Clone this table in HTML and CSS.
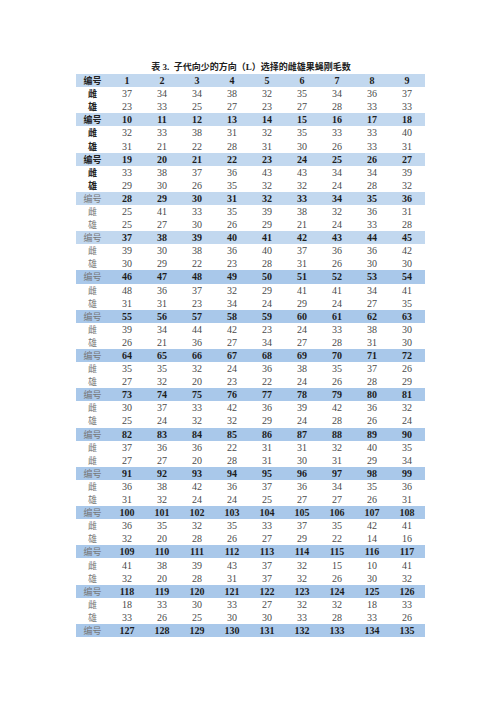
FILE: index.html
```html
<!DOCTYPE html>
<html lang="zh">
<head>
<meta charset="utf-8">
<link rel="stylesheet" href="styles.css">
</head>
<body>
<div class="page">
<div class="title">表 3.&nbsp; 子代向少的方向（L）选择的雌雄果蝇刚毛数</div>
<table class="data">
<tbody>
<tr class="hd light strong"><th>编号</th><td>1</td><td>2</td><td>3</td><td>4</td><td>5</td><td>6</td><td>7</td><td>8</td><td>9</td></tr>
<tr class="strong"><th>雌</th><td>37</td><td>34</td><td>34</td><td>38</td><td>32</td><td>35</td><td>34</td><td>36</td><td>37</td></tr>
<tr class="strong"><th>雄</th><td>23</td><td>33</td><td>25</td><td>27</td><td>23</td><td>27</td><td>28</td><td>33</td><td>33</td></tr>
<tr class="hd light strong"><th>编号</th><td>10</td><td>11</td><td>12</td><td>13</td><td>14</td><td>15</td><td>16</td><td>17</td><td>18</td></tr>
<tr class="strong"><th>雌</th><td>32</td><td>33</td><td>38</td><td>31</td><td>32</td><td>35</td><td>33</td><td>33</td><td>40</td></tr>
<tr class="strong"><th>雄</th><td>31</td><td>21</td><td>22</td><td>28</td><td>31</td><td>30</td><td>26</td><td>33</td><td>31</td></tr>
<tr class="hd light strong"><th>编号</th><td>19</td><td>20</td><td>21</td><td>22</td><td>23</td><td>24</td><td>25</td><td>26</td><td>27</td></tr>
<tr class="strong"><th>雌</th><td>33</td><td>38</td><td>37</td><td>36</td><td>43</td><td>43</td><td>34</td><td>34</td><td>39</td></tr>
<tr class="strong"><th>雄</th><td>29</td><td>30</td><td>26</td><td>35</td><td>32</td><td>32</td><td>24</td><td>28</td><td>32</td></tr>
<tr class="hd light"><th>编号</th><td>28</td><td>29</td><td>30</td><td>31</td><td>32</td><td>33</td><td>34</td><td>35</td><td>36</td></tr>
<tr><th>雌</th><td>25</td><td>41</td><td>33</td><td>35</td><td>39</td><td>38</td><td>32</td><td>36</td><td>31</td></tr>
<tr><th>雄</th><td>25</td><td>27</td><td>30</td><td>26</td><td>29</td><td>21</td><td>24</td><td>33</td><td>28</td></tr>
<tr class="hd light"><th>编号</th><td>37</td><td>38</td><td>39</td><td>40</td><td>41</td><td>42</td><td>43</td><td>44</td><td>45</td></tr>
<tr><th>雌</th><td>39</td><td>30</td><td>38</td><td>36</td><td>40</td><td>37</td><td>36</td><td>36</td><td>42</td></tr>
<tr><th>雄</th><td>30</td><td>29</td><td>22</td><td>23</td><td>28</td><td>31</td><td>26</td><td>30</td><td>30</td></tr>
<tr class="hd"><th>编号</th><td>46</td><td>47</td><td>48</td><td>49</td><td>50</td><td>51</td><td>52</td><td>53</td><td>54</td></tr>
<tr><th>雌</th><td>48</td><td>36</td><td>37</td><td>32</td><td>29</td><td>41</td><td>41</td><td>34</td><td>41</td></tr>
<tr><th>雄</th><td>31</td><td>31</td><td>23</td><td>34</td><td>24</td><td>29</td><td>24</td><td>27</td><td>35</td></tr>
<tr class="hd"><th>编号</th><td>55</td><td>56</td><td>57</td><td>58</td><td>59</td><td>60</td><td>61</td><td>62</td><td>63</td></tr>
<tr><th>雌</th><td>39</td><td>34</td><td>44</td><td>42</td><td>23</td><td>24</td><td>33</td><td>38</td><td>30</td></tr>
<tr><th>雄</th><td>26</td><td>21</td><td>36</td><td>27</td><td>34</td><td>27</td><td>28</td><td>31</td><td>30</td></tr>
<tr class="hd"><th>编号</th><td>64</td><td>65</td><td>66</td><td>67</td><td>68</td><td>69</td><td>70</td><td>71</td><td>72</td></tr>
<tr><th>雌</th><td>35</td><td>35</td><td>32</td><td>24</td><td>36</td><td>38</td><td>35</td><td>37</td><td>26</td></tr>
<tr><th>雄</th><td>27</td><td>32</td><td>20</td><td>23</td><td>22</td><td>24</td><td>26</td><td>28</td><td>29</td></tr>
<tr class="hd"><th>编号</th><td>73</td><td>74</td><td>75</td><td>76</td><td>77</td><td>78</td><td>79</td><td>80</td><td>81</td></tr>
<tr><th>雌</th><td>30</td><td>37</td><td>33</td><td>42</td><td>36</td><td>39</td><td>42</td><td>36</td><td>32</td></tr>
<tr><th>雄</th><td>25</td><td>24</td><td>32</td><td>32</td><td>29</td><td>24</td><td>28</td><td>26</td><td>24</td></tr>
<tr class="hd"><th>编号</th><td>82</td><td>83</td><td>84</td><td>85</td><td>86</td><td>87</td><td>88</td><td>89</td><td>90</td></tr>
<tr><th>雌</th><td>37</td><td>36</td><td>36</td><td>22</td><td>31</td><td>31</td><td>32</td><td>40</td><td>35</td></tr>
<tr><th>雌</th><td>27</td><td>27</td><td>20</td><td>28</td><td>31</td><td>30</td><td>31</td><td>29</td><td>34</td></tr>
<tr class="hd"><th>编号</th><td>91</td><td>92</td><td>93</td><td>94</td><td>95</td><td>96</td><td>97</td><td>98</td><td>99</td></tr>
<tr><th>雌</th><td>36</td><td>38</td><td>42</td><td>36</td><td>37</td><td>36</td><td>34</td><td>35</td><td>36</td></tr>
<tr><th>雄</th><td>31</td><td>32</td><td>24</td><td>24</td><td>25</td><td>27</td><td>27</td><td>26</td><td>31</td></tr>
<tr class="hd"><th>编号</th><td>100</td><td>101</td><td>102</td><td>103</td><td>104</td><td>105</td><td>106</td><td>107</td><td>108</td></tr>
<tr><th>雌</th><td>36</td><td>35</td><td>32</td><td>35</td><td>33</td><td>37</td><td>35</td><td>42</td><td>41</td></tr>
<tr><th>雄</th><td>32</td><td>20</td><td>28</td><td>26</td><td>27</td><td>29</td><td>22</td><td>14</td><td>16</td></tr>
<tr class="hd"><th>编号</th><td>109</td><td>110</td><td>111</td><td>112</td><td>113</td><td>114</td><td>115</td><td>116</td><td>117</td></tr>
<tr><th>雌</th><td>41</td><td>38</td><td>39</td><td>43</td><td>37</td><td>32</td><td>15</td><td>10</td><td>41</td></tr>
<tr><th>雄</th><td>32</td><td>20</td><td>28</td><td>31</td><td>37</td><td>32</td><td>26</td><td>30</td><td>32</td></tr>
<tr class="hd"><th>编号</th><td>118</td><td>119</td><td>120</td><td>121</td><td>122</td><td>123</td><td>124</td><td>125</td><td>126</td></tr>
<tr><th>雌</th><td>18</td><td>33</td><td>30</td><td>33</td><td>27</td><td>32</td><td>32</td><td>18</td><td>33</td></tr>
<tr><th>雄</th><td>33</td><td>26</td><td>25</td><td>30</td><td>30</td><td>33</td><td>28</td><td>33</td><td>26</td></tr>
<tr class="hd"><th>编号</th><td>127</td><td>128</td><td>129</td><td>130</td><td>131</td><td>132</td><td>133</td><td>134</td><td>135</td></tr>
</tbody>
</table>
</div>
</body>
</html>
```
FILE: styles.css
```css
html, body {
  margin: 0;
  padding: 0;
  background: #ffffff;
}
.page {
  width: 500px;
  padding-top: 61px;
  display: flex;
  flex-direction: column;
  align-items: center;
  font-family: "Liberation Serif", "Noto Sans CJK SC", serif;
  color: #4a4a4a;
}
.title {
  font-size: 9px;
  font-weight: bold;
  color: #222;
  line-height: 13px;
  height: 13px;
  margin-left: 2px;
}
.data {
  border-collapse: collapse;
  table-layout: fixed;
  width: 349px;
  font-size: 10px;
}
.data th, .data td {
  height: 13.1px;
  line-height: 13px;
  padding: 0;
  text-align: center;
  white-space: nowrap;
}
.data th {
  width: 34px;
  font-weight: normal;
  color: #777;
  font-family: "Noto Sans CJK SC", sans-serif;
  font-size: 9px;
}
.data td {
  width: 35px;
}
.data tr.strong th {
  font-weight: bold;
  color: #222;
}
.data tr.hd {
  background: #a9c8ea;
}
.data tr.hd.light {
  background: #c2d8ef;
}
.data tr.hd td {
  font-weight: bold;
  color: #1c1c1c;
}
```
